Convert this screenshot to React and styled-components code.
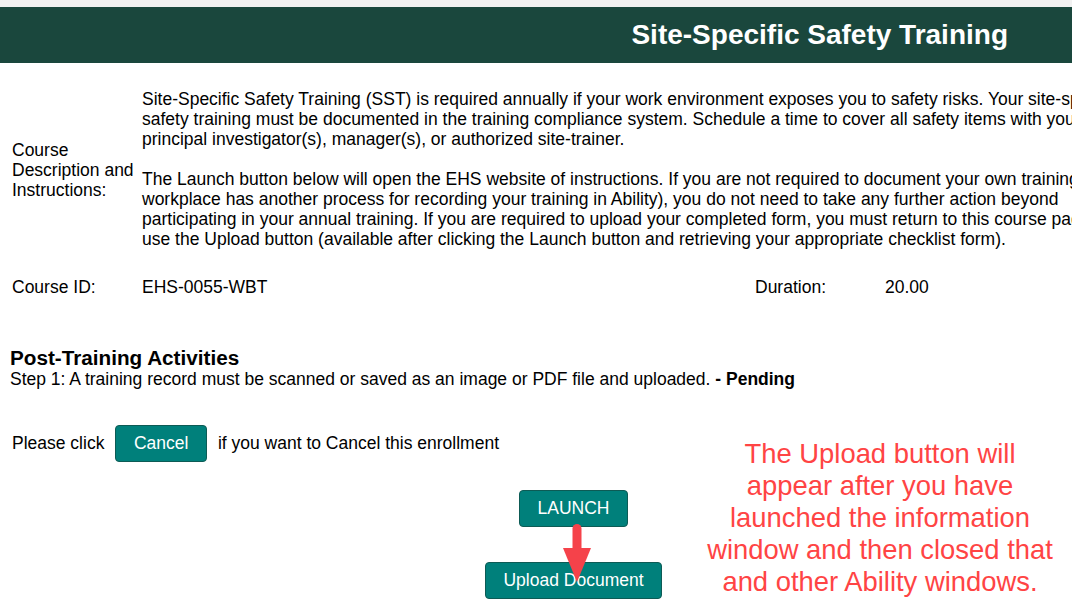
import React from 'react';
import styled, { createGlobalStyle } from 'styled-components';

const GlobalStyle = createGlobalStyle`
  html, body {
    margin: 0;
    padding: 0;
    background: #fff;
    overflow: hidden;
  }
  body {
    font-family: "Liberation Sans", Arial, sans-serif;
    font-size: 17.5px;
    color: #000;
  }
`;

const Page = styled.div`
  width: 1072px;
  height: 614px;
  overflow: hidden;
  border-top: 7px solid #f1f1f1;
  box-sizing: border-box;
`;

const Header = styled.div`
  height: 56px;
  background: #1a473d;
  display: flex;
  align-items: center;
  justify-content: flex-end;
  padding-right: 64px;
`;

const Title = styled.h1`
  margin: 0;
  color: #fff;
  font-size: 28px;
  font-weight: 700;
`;

const InfoTable = styled.div`
  display: grid;
  grid-template-columns: 130px 993px;
  padding: 26px 0 0 12px;
  width: 1200px;
`;

const Label = styled.div`
  align-self: center;
  line-height: 20px;
  padding-top: 2px;
`;

const Description = styled.div`
  line-height: 20px;
  p {
    margin: 0 0 20px;
  }
  p:last-child {
    margin: 0;
  }
`;

const IdRow = styled.div`
  grid-column: 1 / span 2;
  display: grid;
  grid-template-columns: 130px 613px 130px 100px;
  line-height: 20px;
  margin-top: 28px;
`;

const Activities = styled.div`
  padding: 50px 0 0 10px;
`;

const SectionTitle = styled.h2`
  margin: 0;
  font-size: 20.7px;
  font-weight: 700;
  line-height: 22px;
`;

const Step = styled.div`
  line-height: 20px;
  b {
    font-weight: 700;
  }
`;

const Bottom = styled.div`
  display: flex;
  padding-top: 36px;
`;

const LeftCol = styled.div`
  width: 700px;
  display: flex;
  flex-direction: column;
`;

const CancelRow = styled.div`
  display: flex;
  align-items: center;
  gap: 11px;
  padding-left: 12px;
`;

const Button = styled.button`
  font-family: "Liberation Sans", Arial, sans-serif;
  font-size: 17.5px;
  color: #fff;
  background: #00807b;
  border: 1px solid #0d5b55;
  border-radius: 4px;
  height: 37px;
  padding: 0 17.5px;
  white-space: nowrap;
  cursor: pointer;
`;

const ButtonStack = styled.div`
  position: relative;
  display: flex;
  flex-direction: column;
  align-items: center;
  gap: 35px;
  margin-top: 28px;
  margin-left: 485px;
  width: 177px;
`;

const Arrow = styled.svg`
  position: absolute;
  left: 76px;
  top: 30px;
`;

const Note = styled.div`
  width: 360px;
  margin-top: 13px;
  color: #ff4444;
  font-size: 27.4px;
  line-height: 32px;
  text-align: center;
`;

export default function App() {
  return (
    <>
      <GlobalStyle />
      <Page>
        <Header>
          <Title>Site-Specific Safety Training</Title>
        </Header>
        <InfoTable>
          <Label>Course Description and Instructions:</Label>
          <Description>
            <p>
              Site-Specific Safety Training (SST) is required annually if your work environment exposes you to safety
              risks. Your site-specific safety training must be documented in the training compliance system. Schedule a
              time to cover all safety items with your principal investigator(s), manager(s), or authorized site-trainer.
            </p>
            <p>
              The Launch button below will open the EHS website of instructions. If you are not required to document your
              own training (your workplace has another process for recording your training in Ability), you do not need
              to take any further action beyond participating in your annual training. If you are required to upload your
              completed form, you must return to this course page and use the Upload button (available after clicking the
              Launch button and retrieving your appropriate checklist form).
            </p>
          </Description>
          <IdRow>
            <span>Course ID:</span>
            <span>EHS-0055-WBT</span>
            <span>Duration:</span>
            <span>20.00</span>
          </IdRow>
        </InfoTable>
        <Activities>
          <SectionTitle>Post-Training Activities</SectionTitle>
          <Step>
            Step 1: A training record must be scanned or saved as an image or PDF file and uploaded. <b>- Pending</b>
          </Step>
        </Activities>
        <Bottom>
          <LeftCol>
            <CancelRow>
              <span>Please click</span>
              <Button>Cancel</Button>
              <span>if you want to Cancel this enrollment</span>
            </CancelRow>
            <ButtonStack>
              <Button>LAUNCH</Button>
              <Button>Upload Document</Button>
              <Arrow width="32" height="64" viewBox="0 0 32 64">
                <line x1="16" y1="8.5" x2="16" y2="32" stroke="#f5424a" strokeWidth="9" strokeLinecap="round" />
                <polygon points="2,28 30,28 16,62" fill="#f5424a" />
              </Arrow>
            </ButtonStack>
          </LeftCol>
          <Note>
            The Upload button will appear after you have launched the information window and then closed that and
            other Ability windows.
          </Note>
        </Bottom>
      </Page>
    </>
  );
}
